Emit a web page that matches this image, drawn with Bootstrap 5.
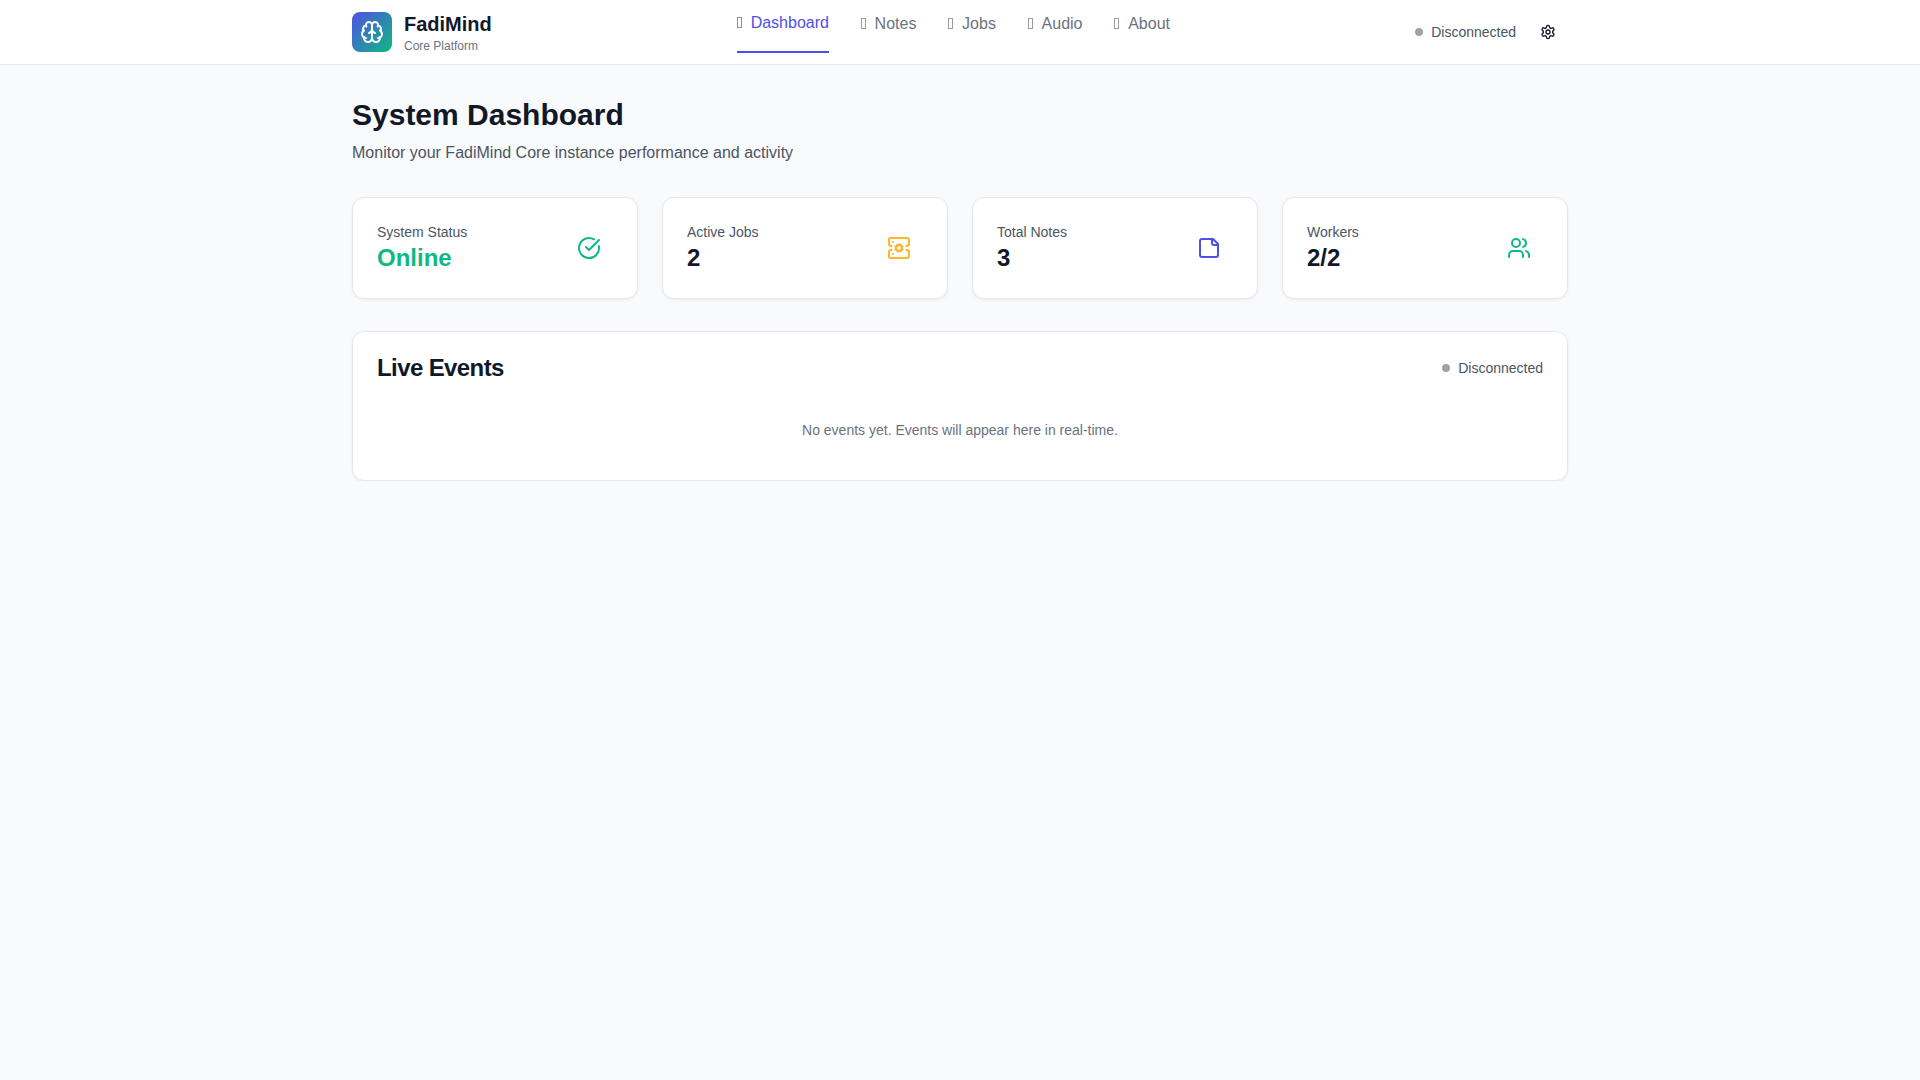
<!DOCTYPE html>
<html lang="en">
<head>
<meta charset="utf-8">
<title>FadiMind</title>
<link href="https://cdn.jsdelivr.net/npm/bootstrap@5.3.0/dist/css/bootstrap.min.css" rel="stylesheet">
<style>
body{font-family:"Liberation Sans",Arial,sans-serif;background:#f9fafb;color:#111827;font-size:16px;line-height:24px}
.fm-wrap{max-width:1280px;margin:0 auto;padding:0 32px}
.fm-head{background:#fff;border-bottom:1px solid #e5e7eb}
.fm-bar{height:64px}
.fm-logo{width:40px;height:40px;border-radius:8px;background:linear-gradient(135deg,#4f50e6,#10b981);color:#fff}
.fm-brand{font-size:20px;line-height:28px;font-weight:700;color:#111827}
.fm-sub{font-size:12px;line-height:16px;color:#6b7280}
.fm-nav{align-self:flex-start;gap:32px}
.fm-link{display:block;color:#6b7280;text-decoration:none;padding:12px 0 16px;height:53px}
.fm-link.fm-on{color:#4f50e6;padding-top:11px;border-bottom:2px solid #4f50e6}
.fm-glyph{display:inline-block;width:5px;height:11px;margin-right:8.7px;border:1px solid currentColor;opacity:.7}
.fm-status{font-size:14px;line-height:20px;color:#4b5563;gap:8px}
.fm-dot{width:8px;height:8px;border-radius:50%;background:#9ca3af}
.fm-gear{padding:12px;line-height:0;color:#111827;background:none;border:0}
.fm-main{padding-top:32px}
.fm-title{font-size:30px;line-height:36px;font-weight:700;margin:0 0 8px;color:#111827}
.fm-lede{margin:0 0 32px;color:#4b5563}
.fm-stat{border:1px solid #e5e7eb;border-radius:12px;padding:24px;box-shadow:0 1px 3px rgba(0,0,0,.06);background:#fff}
.fm-label{font-size:14px;line-height:20px;color:#4b5563}
.fm-value{font-size:24px;line-height:32px;font-weight:700;color:#111827}
.fm-green{color:#10b981}
.fm-amber{color:#fbb529}
.fm-indigo{color:#4f50e6}
.fm-iconbox{width:48px;height:48px;line-height:0}
.fm-live{margin-top:32px;border:1px solid #e5e7eb;border-radius:12px;padding:20px 24px 8px;box-shadow:0 1px 3px rgba(0,0,0,.06);background:#fff}
.fm-livehead{margin:0;font-size:24px;line-height:32px;font-weight:700;letter-spacing:-.6px;color:#111827}
.fm-empty{font-size:14px;line-height:20px;color:#6b7280;text-align:center;padding:32px 0;margin-top:4px}
svg.fm-ico{fill:none;stroke:currentColor;stroke-width:2;stroke-linecap:round;stroke-linejoin:round;display:block}
</style>
</head>
<body>
<header class="fm-head">
  <div class="fm-wrap">
    <div class="fm-bar d-flex align-items-center justify-content-between">
      <div class="d-flex align-items-center gap-2">
        <div class="fm-logo d-flex align-items-center justify-content-center me-1">
          <svg class="fm-ico" width="24" height="24" viewBox="0 0 24 24"><path d="M12 5a3 3 0 1 0-5.997.125 4 4 0 0 0-2.526 5.77 4 4 0 0 0 .556 6.588A4 4 0 1 0 12 18Z"/><path d="M12 5a3 3 0 1 1 5.997.125 4 4 0 0 1 2.526 5.77 4 4 0 0 1-.556 6.588A4 4 0 1 1 12 18Z"/><path d="M15 13a4.5 4.5 0 0 1-3-4 4.5 4.5 0 0 1-3 4"/><path d="M17.599 6.5a3 3 0 0 0 .399-1.375"/><path d="M6.003 5.125A3 3 0 0 0 6.401 6.5"/><path d="M3.477 10.896a4 4 0 0 1 .585-.396"/><path d="M19.938 10.5a4 4 0 0 1 .585.396"/><path d="M6 18a4 4 0 0 1-1.967-.516"/><path d="M19.967 17.484A4 4 0 0 1 18 18"/></svg>
        </div>
        <div>
          <div class="fm-brand">FadiMind</div>
          <div class="fm-sub">Core Platform</div>
        </div>
      </div>
      <nav class="fm-nav d-flex">
        <a class="fm-link fm-on" href="#"><i class="fm-glyph"></i>Dashboard</a>
        <a class="fm-link" href="#"><i class="fm-glyph"></i>Notes</a>
        <a class="fm-link" href="#"><i class="fm-glyph"></i>Jobs</a>
        <a class="fm-link" href="#"><i class="fm-glyph"></i>Audio</a>
        <a class="fm-link" href="#"><i class="fm-glyph"></i>About</a>
      </nav>
      <div class="d-flex align-items-center gap-2">
        <div class="fm-status d-flex align-items-center"><span class="fm-dot"></span><span>Disconnected</span></div>
        <button class="fm-gear ms-1" type="button" aria-label="Settings">
          <svg class="fm-ico" width="16" height="16" viewBox="0 0 24 24"><path d="M12.22 2h-.44a2 2 0 0 0-2 2v.18a2 2 0 0 1-1 1.73l-.43.25a2 2 0 0 1-2 0l-.15-.08a2 2 0 0 0-2.73.73l-.22.38a2 2 0 0 0 .73 2.73l.15.1a2 2 0 0 1 1 1.72v.51a2 2 0 0 1-1 1.74l-.15.09a2 2 0 0 0-.73 2.73l.22.38a2 2 0 0 0 2.73.73l.15-.08a2 2 0 0 1 2 0l.43.25a2 2 0 0 1 1 1.73V20a2 2 0 0 0 2 2h.44a2 2 0 0 0 2-2v-.18a2 2 0 0 1 1-1.73l.43-.25a2 2 0 0 1 2 0l.15.08a2 2 0 0 0 2.73-.73l.22-.39a2 2 0 0 0-.73-2.73l-.15-.08a2 2 0 0 1-1-1.74v-.5a2 2 0 0 1 1-1.74l.15-.09a2 2 0 0 0 .73-2.73l-.22-.38a2 2 0 0 0-2.73-.73l-.15.08a2 2 0 0 1-2 0l-.43-.25a2 2 0 0 1-1-1.73V4a2 2 0 0 0-2-2z"/><circle cx="12" cy="12" r="3"/></svg>
        </button>
      </div>
    </div>
  </div>
</header>
<main class="fm-wrap fm-main">
  <h1 class="fm-title">System Dashboard</h1>
  <p class="fm-lede">Monitor your FadiMind Core instance performance and activity</p>
  <div class="row row-cols-4 g-4">
    <div class="col">
      <div class="fm-stat d-flex align-items-center justify-content-between">
        <div><div class="fm-label">System Status</div><div class="fm-value fm-green">Online</div></div>
        <div class="fm-iconbox d-flex align-items-center justify-content-center fm-green"><svg class="fm-ico" width="24" height="24" viewBox="0 0 24 24"><path d="M21.801 10A10 10 0 1 1 17 3.335"/><path d="m9 11 3 3L22 4"/></svg></div>
      </div>
    </div>
    <div class="col">
      <div class="fm-stat d-flex align-items-center justify-content-between">
        <div><div class="fm-label">Active Jobs</div><div class="fm-value">2</div></div>
        <div class="fm-iconbox d-flex align-items-center justify-content-center fm-amber"><svg class="fm-ico" width="24" height="24" viewBox="0 0 24 24"><path d="m10.852 14.772-.383.923"/><path d="M13.148 9.228l.383-.923"/><path d="M13.148 14.772a3 3 0 0 0-2.296-5.544l-.383-.923"/><path d="m13.53 15.696-.382-.924a3 3 0 1 1-2.296-5.544"/><path d="m14.772 10.852.923-.383"/><path d="m14.772 13.148.923.383"/><path d="M4.5 10H4a2 2 0 0 1-2-2V4a2 2 0 0 1 2-2h16a2 2 0 0 1 2 2v4a2 2 0 0 1-2 2h-.5"/><path d="M4.5 14H4a2 2 0 0 0-2 2v4a2 2 0 0 0 2 2h16a2 2 0 0 0 2-2v-4a2 2 0 0 0-2-2h-.5"/><path d="M6 18h.01"/><path d="M6 6h.01"/><path d="m9.228 10.852-.923-.383"/><path d="m9.228 13.148-.923.383"/></svg></div>
      </div>
    </div>
    <div class="col">
      <div class="fm-stat d-flex align-items-center justify-content-between">
        <div><div class="fm-label">Total Notes</div><div class="fm-value">3</div></div>
        <div class="fm-iconbox d-flex align-items-center justify-content-center fm-indigo"><svg class="fm-ico" width="24" height="24" viewBox="0 0 24 24"><path d="M16 3H5a2 2 0 0 0-2 2v14a2 2 0 0 0 2 2h14a2 2 0 0 0 2-2V8Z"/><path d="M15 3v4a2 2 0 0 0 2 2h4"/></svg></div>
      </div>
    </div>
    <div class="col">
      <div class="fm-stat d-flex align-items-center justify-content-between">
        <div><div class="fm-label">Workers</div><div class="fm-value">2/2</div></div>
        <div class="fm-iconbox d-flex align-items-center justify-content-center fm-green"><svg class="fm-ico" width="24" height="24" viewBox="0 0 24 24"><path d="M16 21v-2a4 4 0 0 0-4-4H6a4 4 0 0 0-4 4v2"/><circle cx="9" cy="7" r="4"/><path d="M22 21v-2a4 4 0 0 0-3-3.87"/><path d="M16 3.13a4 4 0 0 1 0 7.75"/></svg></div>
      </div>
    </div>
  </div>
  <section class="fm-live">
    <div class="d-flex align-items-center justify-content-between">
      <h2 class="fm-livehead">Live Events</h2>
      <div class="fm-status d-flex align-items-center"><span class="fm-dot"></span><span>Disconnected</span></div>
    </div>
    <p class="fm-empty mb-0">No events yet. Events will appear here in real-time.</p>
  </section>
</main>
<script src="https://cdn.jsdelivr.net/npm/bootstrap@5.3.0/dist/js/bootstrap.bundle.min.js"></script>
</body>
</html>
